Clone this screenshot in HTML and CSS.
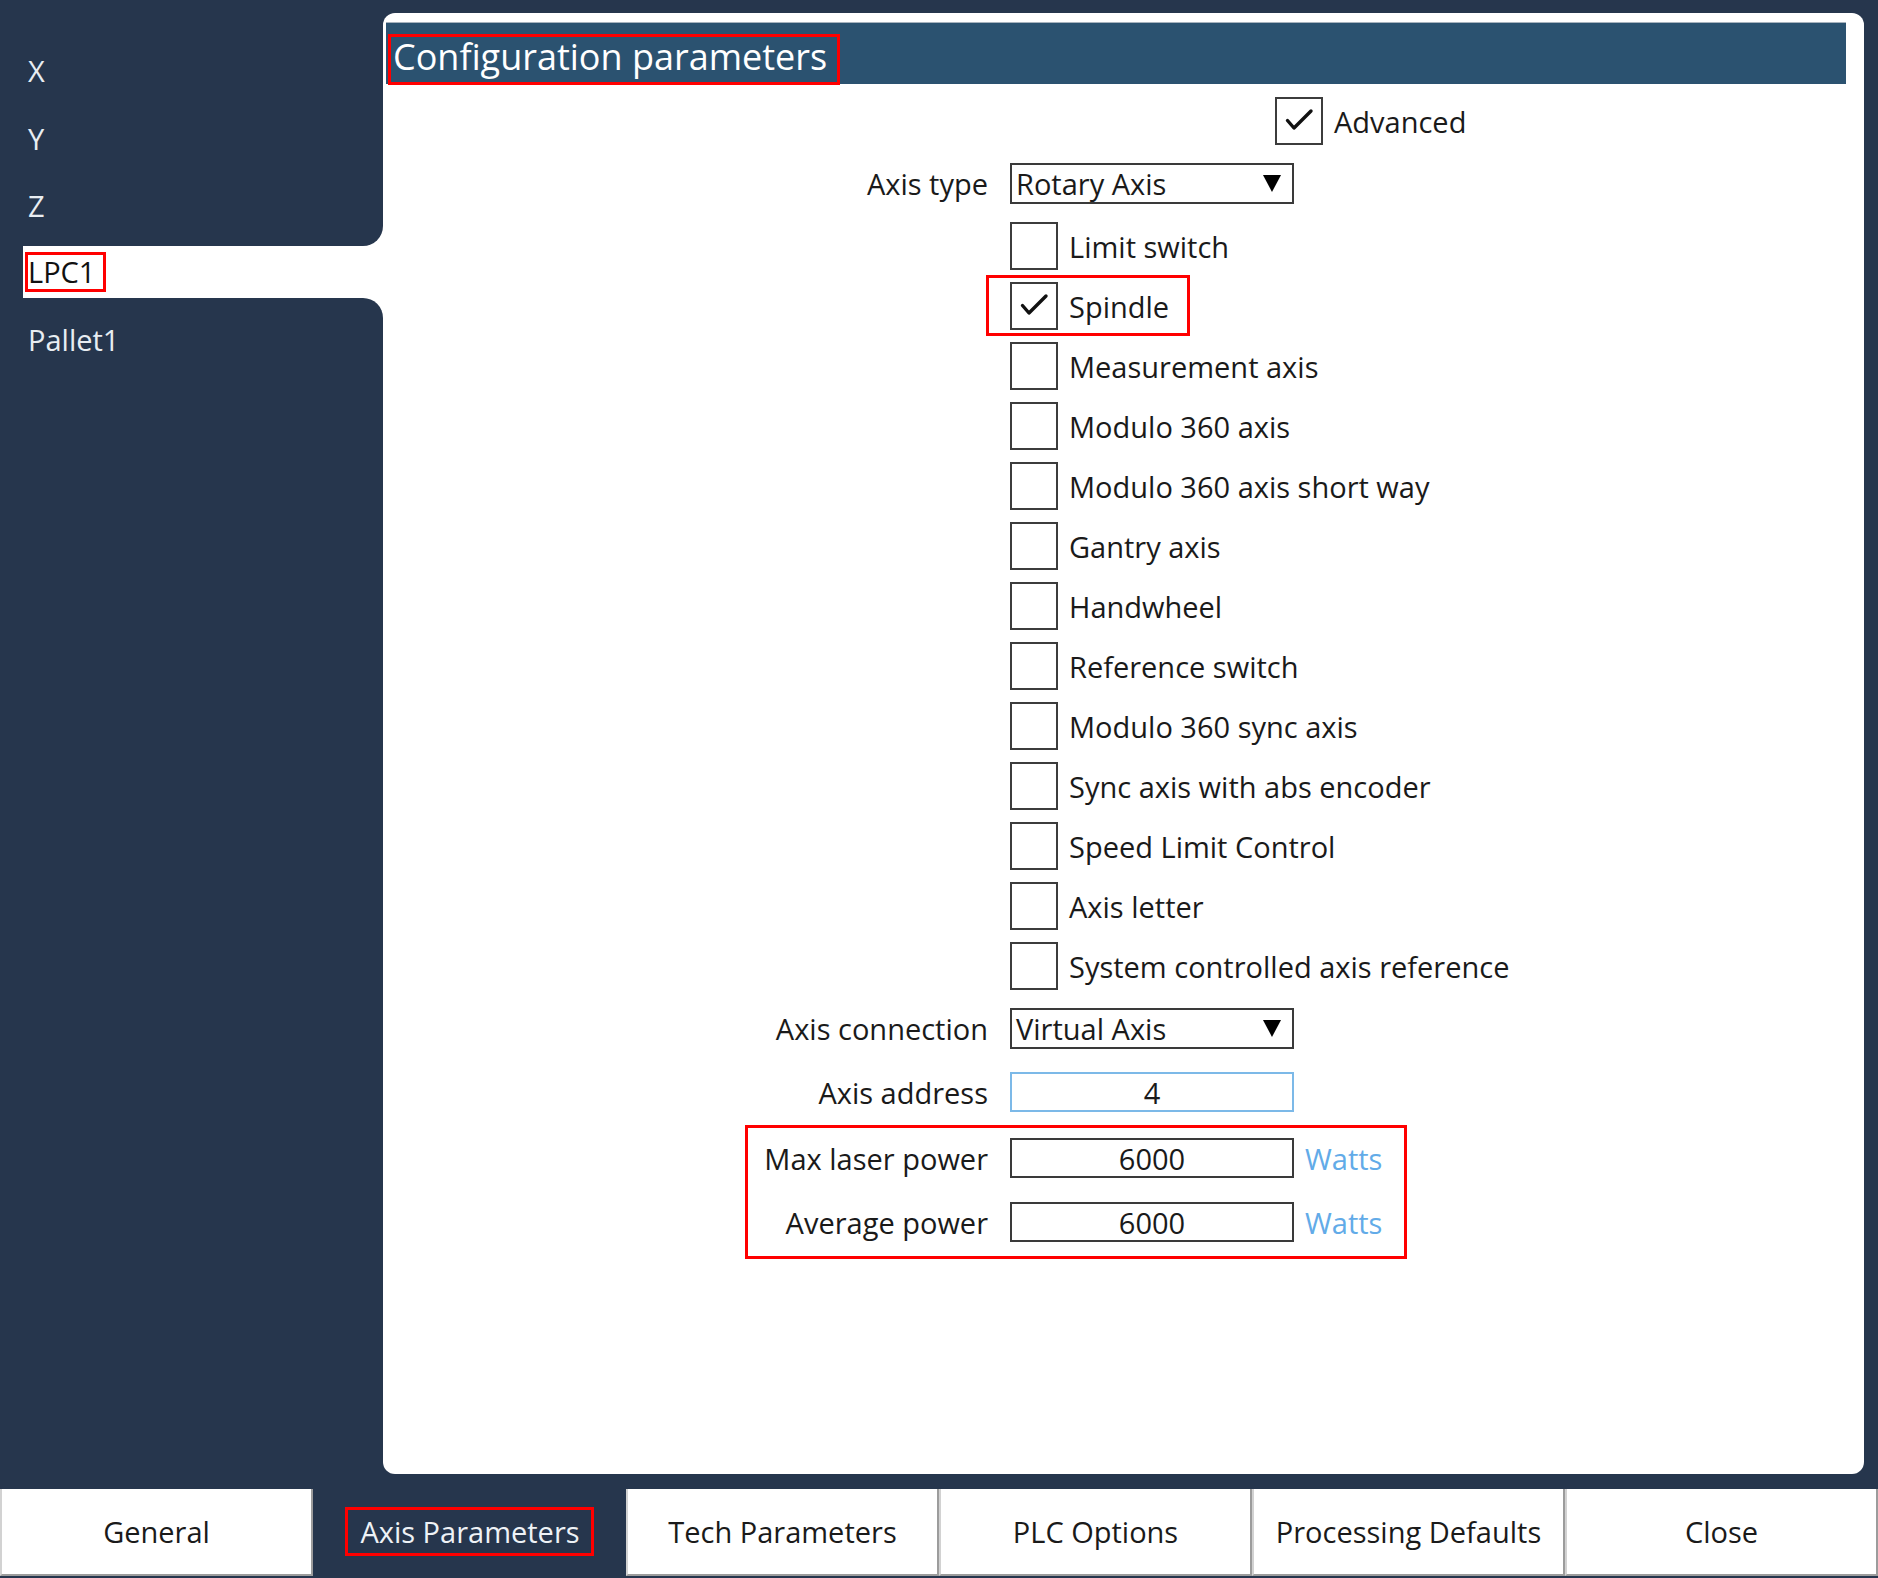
FILE: index.html
```html
<!DOCTYPE html>
<html lang="en">
<head>
<meta charset="utf-8">
<title>Configuration parameters</title>
<link rel="stylesheet" href="styles.css">
</head>
<body>
<div class="app">
  <div class="main">
    <nav class="sidebar">
      <div class="side-group side-top">
        <div class="side-item">X</div>
        <div class="side-item">Y</div>
        <div class="side-item">Z</div>
      </div>
      <div class="side-item selected"><span class="mark-lpc">LPC1</span></div>
      <div class="side-group side-bottom">
        <div class="side-item">Pallet1</div>
      </div>
    </nav>
    <section class="panel">
      <header class="band"><span class="title">Configuration parameters</span></header>
      <div class="form">
        <div class="row row-adv">
          <div class="label"></div>
          <div class="ctl adv">
            <div class="check">
              <span class="box"><svg viewBox="0 0 44 44" width="44" height="44"><path d="M10.5 21.5 L17 29 L34 12" fill="none" stroke="#111" stroke-width="3.4" stroke-linecap="round" stroke-linejoin="round"/></svg></span>
              <span class="ctext">Advanced</span>
            </div>
          </div>
        </div>
        <div class="row row-select">
          <div class="label">Axis type</div>
          <div class="ctl">
            <div class="select"><span>Rotary Axis</span><svg class="tri" viewBox="0 0 18 17" width="18" height="17"><polygon points="0,0 18,0 9,17" fill="#000"/></svg></div>
          </div>
        </div>
        <div class="row row-check first">
          <div class="label"></div>
          <div class="ctl"><div class="check"><span class="box"></span><span class="ctext">Limit switch</span></div></div>
        </div>
        <div class="row row-check">
          <div class="label"></div>
          <div class="ctl"><div class="check marked"><span class="box"><svg viewBox="0 0 44 44" width="44" height="44"><path d="M10.5 21.5 L17 29 L34 12" fill="none" stroke="#111" stroke-width="3.4" stroke-linecap="round" stroke-linejoin="round"/></svg></span><span class="ctext">Spindle</span></div></div>
        </div>
        <div class="row row-check">
          <div class="label"></div>
          <div class="ctl"><div class="check"><span class="box"></span><span class="ctext">Measurement axis</span></div></div>
        </div>
        <div class="row row-check">
          <div class="label"></div>
          <div class="ctl"><div class="check"><span class="box"></span><span class="ctext">Modulo 360 axis</span></div></div>
        </div>
        <div class="row row-check">
          <div class="label"></div>
          <div class="ctl"><div class="check"><span class="box"></span><span class="ctext">Modulo 360 axis short way</span></div></div>
        </div>
        <div class="row row-check">
          <div class="label"></div>
          <div class="ctl"><div class="check"><span class="box"></span><span class="ctext">Gantry axis</span></div></div>
        </div>
        <div class="row row-check">
          <div class="label"></div>
          <div class="ctl"><div class="check"><span class="box"></span><span class="ctext">Handwheel</span></div></div>
        </div>
        <div class="row row-check">
          <div class="label"></div>
          <div class="ctl"><div class="check"><span class="box"></span><span class="ctext">Reference switch</span></div></div>
        </div>
        <div class="row row-check">
          <div class="label"></div>
          <div class="ctl"><div class="check"><span class="box"></span><span class="ctext">Modulo 360 sync axis</span></div></div>
        </div>
        <div class="row row-check">
          <div class="label"></div>
          <div class="ctl"><div class="check"><span class="box"></span><span class="ctext">Sync axis with abs encoder</span></div></div>
        </div>
        <div class="row row-check">
          <div class="label"></div>
          <div class="ctl"><div class="check"><span class="box"></span><span class="ctext">Speed Limit Control</span></div></div>
        </div>
        <div class="row row-check">
          <div class="label"></div>
          <div class="ctl"><div class="check"><span class="box"></span><span class="ctext">Axis letter</span></div></div>
        </div>
        <div class="row row-check">
          <div class="label"></div>
          <div class="ctl"><div class="check"><span class="box"></span><span class="ctext">System controlled axis reference</span></div></div>
        </div>
        <div class="row row-select row-conn">
          <div class="label">Axis connection</div>
          <div class="ctl">
            <div class="select"><span>Virtual Axis</span><svg class="tri" viewBox="0 0 18 17" width="18" height="17"><polygon points="0,0 18,0 9,17" fill="#000"/></svg></div>
          </div>
        </div>
        <div class="row row-input row-addr">
          <div class="label">Axis address</div>
          <div class="ctl"><div class="input focus">4</div></div>
        </div>
        <div class="power-group">
          <div class="row row-input">
            <div class="label">Max laser power</div>
            <div class="ctl"><div class="input">6000</div><span class="unit">Watts</span></div>
          </div>
          <div class="row row-input row-avg">
            <div class="label">Average power</div>
            <div class="ctl"><div class="input">6000</div><span class="unit">Watts</span></div>
          </div>
        </div>
      </div>
    </section>
  </div>
  <div class="tabs">
    <div class="tab">General</div>
    <div class="tab active"><span class="mark-tab">Axis Parameters</span></div>
    <div class="tab">Tech Parameters</div>
    <div class="tab">PLC Options</div>
    <div class="tab">Processing Defaults</div>
    <div class="tab">Close</div>
  </div>
</div>
</body>
</html>
```

FILE: styles.css
```css
* { box-sizing: border-box; }

html, body {
  margin: 0;
  padding: 0;
}

body {
  background: #26364d;
  font-family: "Open Sans", "Liberation Sans", sans-serif;
  color: #1a1a1a;
  width: 1878px;
  height: 1578px;
  overflow: hidden;
}

.app {
  display: flex;
  flex-direction: column;
  height: 1578px;
}

.main {
  display: flex;
  height: 1474px;
  padding-top: 13px;
}

/* ---------- sidebar ---------- */
.sidebar {
  width: 383px;
  flex: none;
  display: flex;
  flex-direction: column;
  background: linear-gradient(to right, transparent 23px, #ffffff 23px);
}

.side-group {
  background: #26364d;
  display: flex;
  flex-direction: column;
}

.side-top {
  padding: 24px 0 7px;
  border-bottom-right-radius: 20px;
}

.side-bottom {
  flex: 1;
  padding-top: 8px;
  border-top-right-radius: 20px;
}

.side-item {
  height: 52px;
  margin: 7.7px 0 7.7px 23px;
  padding-left: 5px;
  display: flex;
  align-items: center;
  font-size: 29px;
  color: #e8edf2;
  flex: none;
}

.side-item.selected {
  margin: 0 0 0 23px;
  background: #ffffff;
  color: #111;
}

.mark-lpc {
  line-height: 34px;
  padding-right: 8px;
  outline: 3px solid #ff0000;
}

/* ---------- panel ---------- */
.panel {
  flex: 1;
  margin-right: 14px;
  background: #ffffff;
  border-radius: 12px;
  padding: 9px 18px 0 3px;
}

.band {
  height: 62px;
  background: #2b5270;
  border-top: 1px solid #a7b3be;
  display: flex;
  align-items: flex-start;
}

.title {
  margin: 14px 0 0 5px;
  padding: 0 10px 5px 2px;
  line-height: 40px;
  font-size: 36px;
  color: #ffffff;
  outline: 3px solid #ff0000;
}

.form {
  padding-top: 13px;
  display: flex;
  flex-direction: column;
}

.row {
  display: grid;
  grid-template-columns: 602px 1fr;
  column-gap: 22px;
  align-items: center;
}

.label {
  text-align: right;
  font-size: 29px;
  color: #1a1a1a;
  white-space: nowrap;
}

.ctl {
  display: flex;
  align-items: center;
}

.adv {
  padding-left: 265px;
}

.row-select { margin-top: 18px; }
.row-check { margin-top: 12px; }
.row-check.first { margin-top: 18px; }
.row-conn { margin-top: 18px; }
.row-addr { margin-top: 23px; }
.row-avg { margin-top: 24px; }

.check {
  position: relative;
  display: flex;
  align-items: center;
  gap: 11px;
}

.box {
  width: 48px;
  height: 48px;
  border: 2px solid #3c3c3c;
  background: #fff;
  display: block;
  flex: none;
}

.box svg { display: block; }

.ctext {
  font-size: 29px;
  color: #1a1a1a;
  white-space: nowrap;
}

.check.marked::after {
  content: "";
  position: absolute;
  left: -24px;
  top: -7px;
  right: -21px;
  bottom: -6px;
  border: 3px solid #ff0000;
}

.select {
  width: 284px;
  height: 41px;
  border: 2px solid #3a3a3a;
  display: flex;
  align-items: center;
  justify-content: space-between;
  padding: 0 11px 0 4px;
  font-size: 29px;
  color: #1a1a1a;
}

.tri { display: block; }

.input {
  width: 284px;
  height: 40px;
  border: 2px solid #3a3a3a;
  display: flex;
  align-items: center;
  justify-content: center;
  font-size: 29px;
  color: #1a1a1a;
}

.input.focus {
  border-color: #7cb9e8;
}

.unit {
  margin-left: 11px;
  font-size: 29px;
  color: #62abe8;
}

.power-group {
  position: relative;
  margin-top: 26px;
}

.power-group::after {
  content: "";
  position: absolute;
  left: 359px;
  width: 656px;
  top: -13px;
  bottom: -17px;
  border: 3px solid #ff0000;
}

/* ---------- bottom tabs ---------- */
.tabs {
  display: flex;
  height: 87px;
  margin-top: 15px;
}

.tab {
  flex: 1;
  display: flex;
  align-items: center;
  justify-content: center;
  background: #ffffff;
  border-left: 2px solid #d2d2d2;
  border-right: 2px solid #9c9c9c;
  border-bottom: 2px solid #9c9c9c;
  font-size: 29px;
  color: #1a1a1a;
}

.tab.active {
  background: transparent;
  border-color: transparent;
  color: #eef2f6;
}

.mark-tab {
  line-height: 43px;
  padding: 0 11px 0 12px;
  outline: 3px solid #ff0000;
}
```
